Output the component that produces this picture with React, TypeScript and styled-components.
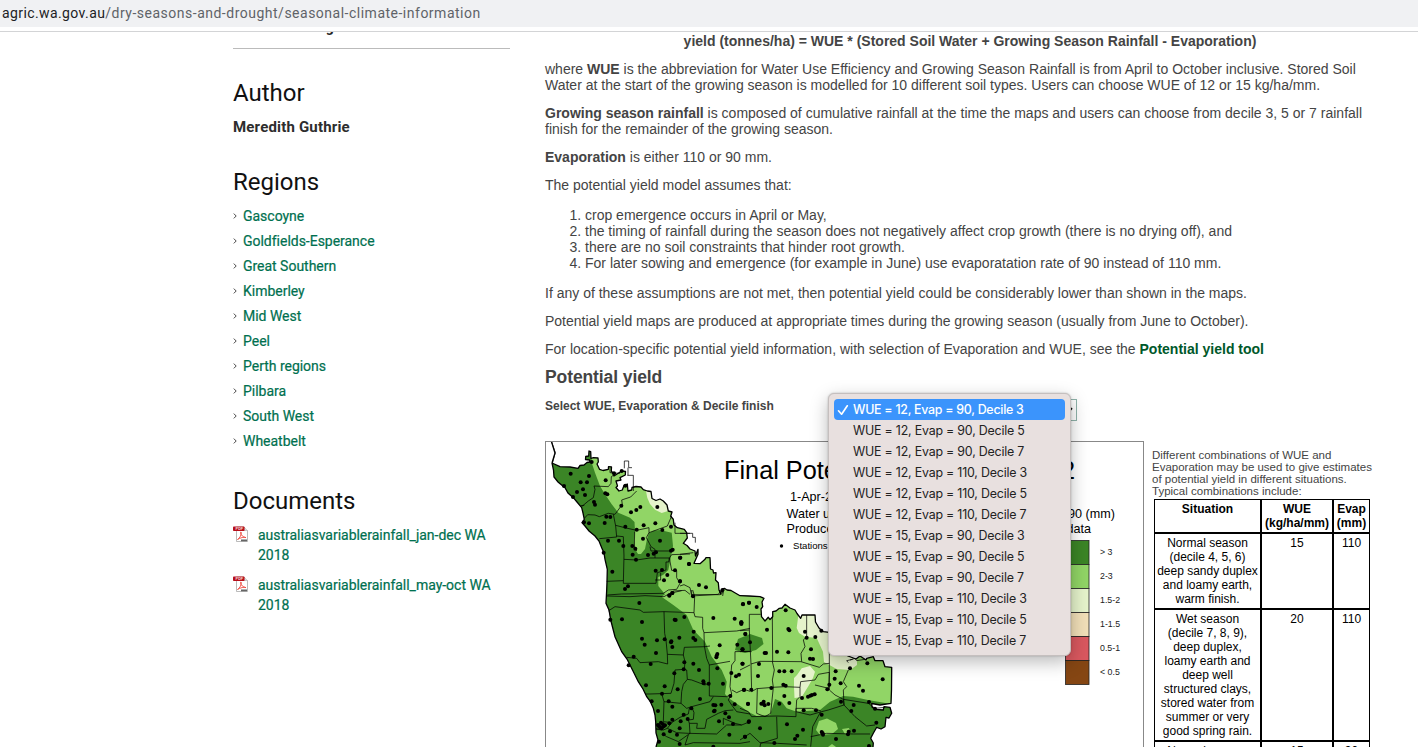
import React from "react";
import styled, { createGlobalStyle } from "styled-components";

const Global = createGlobalStyle`
  html, body { margin: 0; padding: 0; background: #fff; height: 747px; overflow: hidden; }
  * { box-sizing: border-box; }
`;

const Page = styled.div`
  width: 1418px;
  height: 747px;
  overflow: hidden;
  display: flex;
  flex-direction: column;
  font-family: "Liberation Sans", Arial, sans-serif;
  font-size: 14px;
  line-height: 16px;
  color: #444;
`;
const AddressBar = styled.header`
  flex: none;
  height: 32px;
  border-bottom: 1px solid #d3d4d6;
  background: linear-gradient(#f0f1f3 27px, #fff 27px);
  padding: 3px 0 0 2px;
  font: 14px/20px Roboto, sans-serif;
  letter-spacing: 0.5px;
  color: #5f6368;
  white-space: nowrap;
`;
const Host = styled.span`
  color: #202124;
  letter-spacing: 0.4px;
`;
const Content = styled.div`
  flex: 1;
  min-height: 0;
  display: flex;
  gap: 35px;
  padding-left: 233px;
  overflow: hidden;
`;

const Sidebar = styled.aside`
  width: 277px;
  flex: none;
  font-family: Roboto, sans-serif;
`;
const PreviousAuthor = styled.div`
  height: 17px;
  border-bottom: 1px solid #bbb;
  font-size: 14px;
  font-weight: 700;
  line-height: 20px;
  letter-spacing: -0.25px;
  color: #222;
  display: flex;
  overflow: hidden;
  span { margin-top: -15px; }
`;
const SideHeading = styled.h2<{ $top: number }>`
  margin: ${(p) => p.$top}px 0 0;
  font-size: 24px;
  line-height: 30px;
  font-weight: 400;
  color: #111;
`;
const AuthorName = styled.div`
  margin-top: 9px;
  font-size: 15px;
  letter-spacing: 0.18px;
  line-height: 20px;
  font-weight: 700;
  color: #2d2d2d;
`;
const RegionList = styled.ul`
  list-style: none;
  margin: 6px 0 0;
  padding: 0;
`;
const RegionItem = styled.li`
  height: 25px;
  display: flex;
  align-items: center;
  gap: 6px;
`;
const SideLink = styled.a`
  font-size: 14px;
  line-height: 20px;
  font-weight: 400;
  letter-spacing: -0.02px;
  -webkit-text-stroke: 0.2px #00704f;
  color: #00704f;
`;
const DocItem = styled.div`
  display: flex;
  align-items: flex-start;
  gap: 9px;
  margin-bottom: 10px;
  svg { flex: none; margin-top: 1px; }
`;
const DocList = styled.div`
  margin-top: 9px;
`;

const Main = styled.main`
  width: 850px;
  flex: none;
  padding-top: 1px;
`;
const Para = styled.p<{ $center?: boolean }>`
  margin: 0 0 12px;
  text-align: ${(p) => (p.$center ? "center" : "left")};
  white-space: nowrap;
`;
const Assumptions = styled.ol`
  margin: 14px 0;
  padding-left: 40px;
`;
const ToolLink = styled.a`
  color: #00582a;
  font-weight: 700;
`;
const SectionTitle = styled.h3`
  margin: 0;
  font-size: 17.5px;
  line-height: 16px;
  letter-spacing: -0.1px;
`;
const SelectRow = styled.div`
  display: flex;
  justify-content: space-between;
  width: 532px;
  height: 22px;
  margin: 13.5px 0 20.5px;
`;
const SelectLabel = styled.label`
  font-size: 12px;
  line-height: 14px;
  font-weight: 700;
`;
const SelectBox = styled.div`
  position: relative;
  width: 245px;
  height: 22px;
  border: 1px solid #8fb3aa;
  display: flex;
  justify-content: flex-end;
  align-items: center;
  padding-right: 3px;
`;
const Menu = styled.ul`
  position: absolute;
  left: -5px;
  top: -6.5px;
  z-index: 2;
  width: 243px;
  height: 263px;
  margin: 0;
  padding: 5px;
  list-style: none;
  border-radius: 6px;
  background: #e8e0df;
  border: 0.5px solid #c5bfbe;
  box-shadow: 0 6px 18px rgba(0, 0, 0, 0.27), 0 0 2px rgba(0, 0, 0, 0.25);
`;
const Option = styled.li<{ $active?: boolean }>`
  height: 21px;
  display: flex;
  align-items: center;
  border-radius: 4px;
  font: 12.4px/21px Inter, sans-serif;
  letter-spacing: ${(p) => (p.$active ? "-0.26px" : "-0.2px")};
  white-space: nowrap;
  color: ${(p) => (p.$active ? "#fff" : "#222")};
  background: ${(p) => (p.$active ? "#3b94fc" : "transparent")};
  font-weight: ${(p) => (p.$active ? 500 : 400)};
`;
const CheckSlot = styled.span`
  width: 19px;
  padding-left: 3px;
  display: flex;
`;
const Results = styled.div`
  display: flex;
  align-items: flex-start;
  gap: 8px;
`;
const MapSvg = styled.svg`
  display: block;
  flex: none;
`;
const Notes = styled.div`
  padding-top: 8px;
  font-size: 11.5px;
  line-height: 12px;
  white-space: nowrap;
`;
const Table = styled.table`
  margin: 2px 0 0 2px;
  border-collapse: separate;
  border-spacing: 0;
  table-layout: fixed;
  width: 216px;
  font-size: 12px;
  line-height: 14px;
  color: #000;
  text-align: center;
  th, td {
    padding: 2px 0;
    border: 1px solid #000;
    vertical-align: top;
  }
`;

const regions = [
  "Gascoyne", "Goldfields-Esperance", "Great Southern", "Kimberley", "Mid West",
  "Peel", "Perth regions", "Pilbara", "South West", "Wheatbelt",
];
const docs = ["australiasvariablerainfall_jan-dec WA 2018", "australiasvariablerainfall_may-oct WA 2018"];
const options = [12, 15].flatMap((wue) =>
  [90, 110].flatMap((evap) => [3, 5, 7].map((decile) => `WUE = ${wue}, Evap = ${evap}, Decile ${decile}`)),
);
const legend = [
  ["#3b8526", "> 3"], ["#91d566", "2-3"], ["#e5f3cb", "1.5-2"],
  ["#f1dfb8", "1-1.5"], ["#d9585f", "0.5-1"], ["#854613", "< 0.5"],
];
const situations: [string[], number, number][] = [
  [["Normal season", "(decile 4, 5, 6)", "deep sandy duplex", "and loamy earth,", "warm finish."], 15, 110],
  [["Wet season", "(decile 7, 8, 9),", "deep duplex,", "loamy earth and", "deep well", "structured clays,", "stored water from", "summer or very", "good spring rain."], 20, 110],
  [["Normal season", "(decile 4, 5, 6)"], 15, 90],
];

const coast =
  "M552 463 L553.5 470 554 477 558 482 565 487.7 568 493 573.3 497.7 577 502 581.7 507.7 583 513 584.3 519.3 582 522.7 585 526 589 531 595 536 599 541 601.7 547.7 604 553 605 559.3 607.3 569.3 607 582 606.7 590 606 603.3 609 610 610.7 620 615 636.7 621.7 651.7 627 659 630 665 634 673 638.3 681.7 643 689 646.7 696.7 650 701 653.3 708.3 655 715 655.7 721.7 656 733 658 740 656 747";
const inland =
  "M552 463 L560 466.7 570 467 578 468.3 580 465.5 584 465 587 462.5 590 462 589.5 460 585.5 459.5 585.7 456.5 588.7 456 589 451 590.7 451.7 591 458.5 593.3 457.7 598 458 598.3 462 597 464 599.5 469.3 603 470.5 608.3 469.3 608.5 466.7 611.5 467 611.3 471 613.3 473.7 614 476 621.7 471 625.5 471.5 625.3 475 620 477.7 621 480 616 481 617.5 486 616 487.5 619 491 622.3 490 624 485.5 627.3 484 628 491 631.7 490 632 487.5 636 486.5 641 487 643.3 489.7 647.3 491 651 491.5 652 498.5 656 500.5 660 499 663.3 501 667 505 668.3 511 672 512 670.7 516.3 673.3 519.3 674 525 677.3 527.7 684.3 529.3 686.7 532.7 687.3 538 683.3 543.3 687 545.5 690 549 695 551 695.5 556 698 549.3 698 554.3 694 563.3 700 563.7 705 559.3 706 557.7 710 557.7 710.5 569 713 570 713.5 573 716 572.7 715.5 580 718.3 582.7 719 590 720.7 593.5 722 589 724.7 588.5 727 590 731 590.5 740 595.7 749 596 760 596.7 764 598.3 762 602 762.7 606.7 761 609 761.5 616.7 765 621 768.3 617.3 770 619.5 772.7 616.7 772.7 611.7 776 611 779.3 608.3 782 608 785 604.3 790 608 795 610 797 613.5 800.7 618.3 802 615 815 615 815.5 622 819 628 823.3 631.7 829.3 632.3 848 656 856 659 860 656 866 660 866.7 658.3 873.3 656.7 875 660.7 883 660.7 885 666.7 891.7 667.3 891.5 690 891 703.3 880 705 871.7 703.5 872 707 875 709.3 883.3 710 884 706.7 890 707.3 891.7 713.3 889 718 886 717.3 885 726.7 881 729 876.7 727.3 873.3 733.3 870.7 738.3 873.3 743 873 747";
const land = `${coast} L873 747 ${inland.replace("M552 463 L", "").split(" ").reduce<string[][]>((acc, v, i) => {
  if (i % 2 === 0) acc.push([v]);
  else acc[acc.length - 1].push(v);
  return acc;
}, []).reverse().map((p) => p.join(" ")).join(" ")} Z`;
const midYield =
  "M591.7 455 L591.7 462.7 595 472.7 600 486 605 494.3 611.7 504.3 618.3 512.7 630 517.7 634.5 522 635 531 634 540 635 549 638 554 641 554 645 549 647 539 649 533 654 530.5 660 530 671.7 532.7 673 546 670.5 559.3 668.3 570 663 575 658.3 577 658.3 586 665 594.3 661.7 596.7 664 598.5 673.3 605 686.7 615 693.3 630 705 641.7 711.7 656.7 721.7 670 726.7 681.7 725 694 730 699 750 712.7 756.7 716 770 715 773.3 705 775 699 781.7 701.7 786.7 708.3 796.7 711.7 820 710 830 701.7 843.3 696 853 696.7 868 700 891 704 L910 704 L910 420 L585 420 Z";

const sheets = [
  {
    x: 540, y: 436,
    lines: [
      "M34 15L46 50L37 82", "M133 208L122 209M125 212L145 195L160 185L165 160L162 150L205 152L213 142L214 122L228 112",
      "M133 247L143 236L165 237L178 242L205 232L225 235L247 205L245 192L272 183L290 165", "M220 235L227 270L230 303L178 308",
      "M227 268L258 276L290 283L327 275L327 290L382 270L395 240", "M230 300L250 302L252 360L250 442L348 442L352 410L378 402L378 378L386 378L388 366",
      "M252 370L290 372L330 366L388 366L395 356L450 354", "M284 287L283 330L290 345", "M327 290L319 305L328 322L333 332L345 340L345 366M330 332L333 345L400 345",
      "M200 436L250 434", "M202 477L245 474L370 472L385 462L410 460L420 442L410 425L410 404L395 403L388 366", "M405 260L405 292L450 292",
      "M345 432L362 432L362 410M385 480L400 465L435 463L450 475", "M253 75L253 97M253 75L266 75L266 95L276 95M264 95L264 118M210 95L210 110L240 112",
      "M280 118L280 165M262 118L280 118",
    ],
    dots: "92,113 147,120 197,133 122,139 141,139 129,160 111,168 135,177 72,150 99,183 162,198 165,206 196,172 202,175 245,105 256,149 222,112 244,209 273,229 289,222 301,213 352,213 199,242 211,243 194,261 147,262 132,259 256,272 311,268 346,262 290,281 393,272 367,282 309,308 204,314 237,314 250,330 277,330 286,338 278,356 324,357 341,353 348,349 360,314 393,344 398,341 420,365 288,371 191,350 217,407 347,404 366,402 405,403 382,417 372,433 420,436 447,384 264,451 255,459 397,471 388,478 155,78",
  },
  {
    x: 680, y: 436,
    lines: ["M0 292L38 292L38 304L46 304L46 320", "M0 355L40 350", "M0 450L12 446L30 455L35 480L115 475L120 468"],
    dots: "1,365 27,384 0,436 57,447 78,454 127,463",
  },
  {
    x: 590, y: 590,
    lines: [
      "M50 18L120 20L165 17L222 20L240 10L275 2", "M55 63L75 50L150 60L160 67L222 65L312 68L314 20L308 0", "M305 14L390 14M305 14L305 0",
      "M222 65L224 130L228 150L232 193L233 222L205 215L150 218L140 205L110 202", "M232 193L280 195L283 172L345 170L360 168",
      "M312 68L315 80L338 82L338 115L342 128L440 123L480 115", "M342 128L343 168L350 205L358 225L358 318L410 320L425 312L420 290L425 225L435 212L435 185L480 184",
      "M358 225L420 214", "M280 195L285 215L283 238L255 240L252 280L243 310L180 312L165 312", "M283 238L290 240L292 268L305 270L345 285L355 280",
      "M292 268L280 283L275 305L273 340L222 335L216 314", "M273 340L290 355L305 350L360 335L370 320", "M222 335L220 395L245 398L270 382L295 372L298 355",
      "M305 350L312 368L310 388L295 390L298 400L322 400L320 415L345 415L350 388L385 370L405 362L430 360",
      "M425 312L415 330L425 345L440 365L480 372", "M426 300L440 308L462 298L480 304", "M245 398L232 415L220 420L198 418", "M232 415L260 428L295 430L380 432L410 405L455 405L480 395",
      "M298 400L300 430L265 455L230 440L218 432", "M295 435L285 465L310 458L450 460L480 455", "M400 405L400 385L435 400L455 405",
      "M198 405L215 400L225 405L215 420L198 415", "M388 0L392 15L400 5L398 18",
    ],
    dots: "238,17 247,9 309,19 148,39 61,89 96,88 156,96 254,89 257,90 283,81 370,84 434,86 459,42 477,38 454,101 454,97 466,132 156,146 201,151 164,164 224,148 244,154 243,157 268,143 247,171 311,125 310,144 316,150 389,166 442,164 457,178 382,192 380,197 379,202 198,189 131,200 116,226 182,222 283,217 310,221 281,238 253,250 327,240 382,235 424,249 438,259 447,254 458,221 340,274 341,280 356,281 399,281 168,286 224,289 263,298 216,311 330,327 462,300 421,318 185,334 236,334 247,350 204,363 304,355 370,345 376,346 394,344 434,343 474,341 372,364 374,362 406,370 417,382 281,374 293,387 247,389 272,394 387,394 429,402 477,394 204,405 210,412 218,402 221,409 213,398 207,409 215,415 225,406 238,400 269,415 240,424 221,433 261,434 418,434 465,440 207,455 269,462 370,470",
  },
  {
    x: 740, y: 590,
    lines: [
      "M0 122L28 120L28 73L62 73M28 120L30 160L33 222L60 214L183 215L238 232L250 222L268 220", "M97 80L98 215M97 215L103 240L97 270L100 292L50 296L35 305L33 222",
      "M97 292L135 290L180 292L182 275L225 270L235 253L268 247", "M200 75L200 140L190 150L195 170L183 190L185 215", "M268 127L268 300L285 315L310 328L312 345L265 360L245 365L210 375L168 365L170 330L180 320L180 292",
      "M52 296L50 370L75 380L92 370L100 292", "M0 355L25 365L35 380L110 378L168 380L168 355L215 355L242 362", "M110 380L112 445L62 460L60 471M0 450L30 430L60 458L112 460L200 465",
      "M242 365L218 410L212 470M212 440L260 430L340 432L390 432", "M325 240L310 275L320 290L310 300L312 345L345 380L380 408L405 405", "M310 328L385 340L405 355L435 352",
      "M0 185L35 185M0 240L30 225", "M330 210L345 205L350 212L375 208M325 218L320 212L338 208", "M268 247L266 295L225 285",
    ],
    dots: "9,43 27,38 50,51 137,61 4,101 4,97 16,132 81,119 145,117 148,121 195,125 244,122 200,143 226,141 30,157 8,178 213,178 74,189 78,189 111,185 145,187 210,206 219,207 7,221 57,222 54,258 118,244 133,244 155,244 287,244 382,220 330,235 191,258 284,266 428,268 302,280 268,284 130,284 137,287 262,298 357,287 369,302 94,294 12,299 34,299 133,318 186,324 204,320 211,317 216,315 224,313 24,342 64,341 71,335 74,346 85,342 70,341 118,341 148,339 387,336 303,335 341,345 405,356 334,363 191,361 228,361 245,374 26,396 409,398 60,415 141,403 189,419 172,437 165,447 15,440 103,459 245,426 248,430 249,434 326,425 342,422 324,433 288,447 387,468",
  },
];

function YieldMap() {
  return (
    <MapSvg width="599" height="306" viewBox="545 441 599 306" fontFamily="'Liberation Sans', Arial, sans-serif">
      <defs>
        <clipPath id="land"><path d={land} /></clipPath>
      </defs>
      <g clipPath="url(#land)">
        <rect x="545" y="441" width="360" height="306" fill="#3b8526" />
        <path d={midYield} fill="#91d566" />
        <path d="M735 650L738 639 750 634 762 638 763.5 644 756 650 745 653Z" fill="#3b8526" />
        <g fill="#e5f3cb">
          <path d="M646 491L647.3 497.7 650 504 655 509.7 661.7 513 668 511 680 500 660 480Z" />
          <path d="M799 610L796.7 628 799 633 805 636.7 816.7 638 823 651.7 824 662 836.7 669 850 670 857 665 857 640 820 610Z" />
          <path d="M801.7 668.3L810 666 815 671.7 813 678 808 686.7 801.7 697 794.5 698 794 686.7 794 678 797 675Z" />
        </g>
        <g fill="#91d566">
          <path d="M816 730L819 721 827 718.5 836 723 838 729 832 734 820 735Z" />
          <path d="M842 729L849 728 850 732 845 734Z" />
          <path d="M828 747L832 744 836 747Z" />
        </g>
      </g>
      <path d={coast} fill="none" stroke="#000" strokeWidth="1.3" />
      <path d={inland} fill="none" stroke="#000" strokeWidth="1.3" strokeLinejoin="round" />
      {sheets.map((s) => (
        <g key={`${s.x}-${s.y}`} transform={`translate(${s.x} ${s.y}) scale(0.33333)`}>
          <path d={s.lines.join("")} fill="none" stroke="#000" strokeOpacity="0.85" strokeWidth="2.6" />
          {s.dots.split(" ").map((d, i) => {
            const [cx, cy] = d.split(",");
            return <circle key={i} cx={cx} cy={cy} r="6" />;
          })}
        </g>
      ))}
      <path d="M551.3 441L555 453L552 463" fill="none" stroke="#000" strokeWidth="1.3" />
      <text x="724" y="479" fontSize="25.3">Final Potential Yield</text>
      <text x="1075" y="479" fontSize="25.3" textAnchor="end">2022</text>
      <text x="790" y="501" fontSize="12.6">1-Apr-2022</text>
      <text x="786.5" y="517.5" fontSize="12.6">Water use</text>
      <text x="1115" y="517.5" fontSize="12.6" textAnchor="end">90 (mm)</text>
      <text x="786.5" y="533" fontSize="12.6">Produced</text>
      <text x="1091" y="533" fontSize="12.6" textAnchor="end">data</text>
      <circle cx="781.5" cy="546" r="1.7" />
      <text x="793" y="548.5" fontSize="9.6">Stations</text>
      {legend.map(([color, label], i) => (
        <g key={label}>
          <rect x="1065.5" y={540.5 + i * 24} width="23.5" height="24" fill={color} stroke="#222" strokeWidth="0.8" />
          <text x="1100" y={555 + i * 24} fontSize="8.8" fill="#222">{label}</text>
        </g>
      ))}
      <rect x="545.5" y="441.5" width="598" height="320" fill="none" stroke="#888" />
    </MapSvg>
  );
}

function PdfIcon() {
  return (
    <svg width="16" height="17" viewBox="0 0 16 17">
      <path d="M3.5 1H11l3.5 3.5V15.5H3.5Z" fill="#fff" stroke="#aaa" strokeWidth="0.8" />
      <path d="M11 1v3.5h3.5" fill="#ddd" stroke="#aaa" strokeWidth="0.6" />
      <rect x="0" y="0.5" width="11.5" height="4.6" rx="0.8" fill="#b80f1a" />
      <text x="2.6" y="4.2" fontSize="3.8" fontWeight="700" fill="#f6dada" fontFamily="Liberation Sans, sans-serif">PDF</text>
      <path d="M4.5 13.5C7 12 8.6 8.5 8.2 6.2C8 5.6 7.4 6 7.6 7C8 9 10 11.3 13 11.6C11 10.8 7.5 11.6 4.5 13.5Z" fill="none" stroke="#ee4a3e" strokeWidth="0.9" />
      <rect x="8" y="13.5" width="6" height="1.8" fill="#666" />
    </svg>
  );
}

export default function App() {
  return (
    <Page>
      <Global />
      <AddressBar><Host>agric.wa.gov.au</Host>/dry-seasons-and-drought/seasonal-climate-information</AddressBar>
      <Content>
        <Sidebar>
          <PreviousAuthor><span>Business management</span></PreviousAuthor>
          <SideHeading $top={29}>Author</SideHeading>
          <AuthorName>Meredith Guthrie</AuthorName>
          <SideHeading $top={30}>Regions</SideHeading>
          <RegionList>
            {regions.map((r) => (
              <RegionItem key={r}>
                <svg width="4" height="6" viewBox="0 0 4 6"><path d="M0.8 0.6L3.2 3L0.8 5.4" fill="none" stroke="#333" strokeWidth="0.9" /></svg>
                <SideLink>{r}</SideLink>
              </RegionItem>
            ))}
          </RegionList>
          <SideHeading $top={33}>Documents</SideHeading>
          <DocList>
            {docs.map((d) => (
              <DocItem key={d}><PdfIcon /><SideLink>{d}</SideLink></DocItem>
            ))}
          </DocList>
        </Sidebar>
        <Main>
          <Para $center><b>yield (tonnes/ha) = WUE * (Stored Soil Water + Growing Season Rainfall - Evaporation)</b></Para>
          <Para>
            where <b>WUE</b> is the abbreviation for Water Use Efficiency and Growing Season Rainfall is from April to October inclusive. Stored Soil<br />
            Water at the start of the growing season is modelled for 10 different soil types. Users can choose WUE of 12 or 15 kg/ha/mm.
          </Para>
          <Para>
            <b>Growing season rainfall</b> is composed of cumulative rainfall at the time the maps and users can choose from decile 3, 5 or 7 rainfall<br />
            finish for the remainder of the growing season.
          </Para>
          <Para><b>Evaporation</b> is either 110 or 90 mm.</Para>
          <Para>The potential yield model assumes that:</Para>
          <Assumptions>
            <li>crop emergence occurs in April or May,</li>
            <li>the timing of rainfall during the season does not negatively affect crop growth (there is no drying off), and</li>
            <li>there are no soil constraints that hinder root growth.</li>
            <li>For later sowing and emergence (for example in June) use evaporatation rate of 90 instead of 110 mm.</li>
          </Assumptions>
          <Para>If any of these assumptions are not met, then potential yield could be considerably lower than shown in the maps.</Para>
          <Para>Potential yield maps are produced at appropriate times during the growing season (usually from June to October).</Para>
          <Para>For location-specific potential yield information, with selection of Evaporation and WUE, see the <ToolLink>Potential yield tool</ToolLink></Para>
          <SectionTitle>Potential yield</SectionTitle>
          <SelectRow>
            <SelectLabel>Select WUE, Evaporation &amp; Decile finish</SelectLabel>
            <SelectBox>
              <svg width="8" height="6" viewBox="0 0 8 6"><path d="M1 1.2L4 4.4L7 1.2" fill="none" stroke="#111" strokeWidth="1.8" /></svg>
              <Menu>
                {options.map((o, i) => (
                  <Option key={o} $active={i === 0}>
                    <CheckSlot>
                      {i === 0 && (
                        <svg width="12" height="12" viewBox="0 0 12 12"><path d="M1.5 6.8L4.6 10.2L10.3 1.8" fill="none" stroke="#fff" strokeWidth="1.7" strokeLinecap="round" strokeLinejoin="round" /></svg>
                      )}
                    </CheckSlot>
                    {o}
                  </Option>
                ))}
              </Menu>
            </SelectBox>
          </SelectRow>
          <Results>
            <YieldMap />
            <Notes>
              Different combinations of WUE and<br />
              Evaporation may be used to give estimates<br />
              of potential yield in different situations.<br />
              Typical combinations include:
              <Table>
                <colgroup><col width="107" /><col width="72" /><col width="37" /></colgroup>
                <thead><tr><th>Situation</th><th>WUE<br />(kg/ha/mm)</th><th>Evap<br />(mm)</th></tr></thead>
                <tbody>
                  {situations.map(([text, wue, evap], i) => (
                    <tr key={i}>
                      <td>{text.map((t) => <React.Fragment key={t}>{t}<br /></React.Fragment>)}</td>
                      <td>{wue}</td>
                      <td>{evap}</td>
                    </tr>
                  ))}
                </tbody>
              </Table>
            </Notes>
          </Results>
        </Main>
      </Content>
    </Page>
  );
}
